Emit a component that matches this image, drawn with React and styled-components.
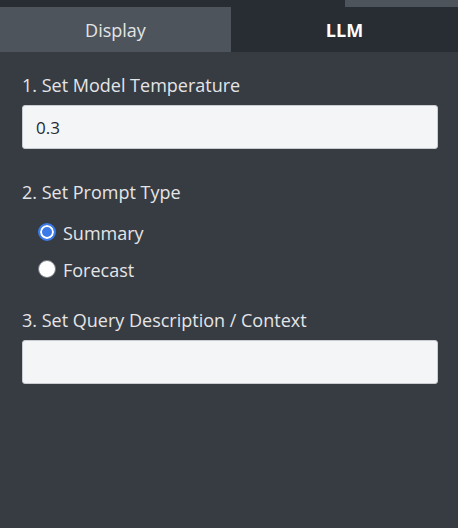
import React, {useState} from 'react';
import styled, {createGlobalStyle} from 'styled-components';

const GlobalStyle = createGlobalStyle`
    html, body {
        margin: 0;
        padding: 0;
        background: #373b42;
        font-family: "Open Sans", "Noto Sans", sans-serif;
    }
`;

const Panel = styled.div`
    width: 458px;
    height: 528px;
    display: flex;
    flex-direction: column;
    background: #373b42;
    color: #e6e7e9;
`;

const TopStrip = styled.div`
    height: 7px;
    display: flex;
    justify-content: flex-end;
    background: #282c33;
`;

const StripThumb = styled.div`
    width: 113px;
    background: #4e545b;
`;

const TabBar = styled.div`
    display: grid;
    grid-template-columns: 231px 1fr;
    height: 45px;
`;

const Tab = styled.button`
    border: none;
    margin: 0;
    padding: 0;
    font-family: inherit;
    font-size: 18px;
    cursor: pointer;
    background: ${props => props.$active ? '#282c33' : '#4e545b'};
    color: ${props => props.$active ? '#ffffff' : '#e3e4e6'};
    font-weight: ${props => props.$active ? 700 : 400};
`;

const Body = styled.div`
    display: flex;
    flex-direction: column;
    padding: 21px 20px 0 22px;
`;

const Section = styled.div`
    display: flex;
    flex-direction: column;
    margin-bottom: ${props => props.$gap || 31}px;
`;

const SectionLabel = styled.label`
    font-size: 18px;
    line-height: 24px;
    color: #e4e5e7;
    margin-bottom: 8px;
`;

const TextInput = styled.input`
    box-sizing: border-box;
    width: 416px;
    height: 44px;
    border: 1px solid #c9ccd1;
    border-radius: 3px;
    background: #f4f5f7;
    padding: 0 13px;
    font-family: inherit;
    font-size: 17px;
    color: #262a30;
    outline: none;
`;

const RadioList = styled.div`
    display: flex;
    flex-direction: column;
    gap: 14px;
    padding-left: 16px;
    margin-top: 10px;
`;

const RadioRow = styled.label`
    display: flex;
    align-items: center;
    gap: 7px;
    font-size: 18px;
    line-height: 23px;
    color: #e4e5e7;
    cursor: pointer;
`;

const RadioDot = styled.input`
    appearance: none;
    width: 18px;
    height: 18px;
    margin: 0 0 3px 0;
    border-radius: 50%;
    background: #ffffff;
    border: 1px solid #767a80;
    box-sizing: border-box;
    &:checked {
        background: #3b7ae8;
        border: 2px solid #3b7ae8;
        box-shadow: inset 0 0 0 2px #ffffff;
    }
`;

const App = () => {
    const [type, setType] = useState('summary');
    return (
        <>
            <GlobalStyle />
            <Panel>
                <TopStrip><StripThumb /></TopStrip>
                <TabBar>
                    <Tab>Display</Tab>
                    <Tab $active>LLM</Tab>
                </TabBar>
                <Body>
                    <Section>
                        <SectionLabel>1. Set Model Temperature</SectionLabel>
                        <TextInput defaultValue="0.3" />
                    </Section>
                    <Section $gap={26}>
                        <SectionLabel>2. Set Prompt Type</SectionLabel>
                        <RadioList>
                            <RadioRow>
                                <RadioDot type="radio" name="ptype" checked={type === 'summary'} onChange={() => setType('summary')} />
                                Summary
                            </RadioRow>
                            <RadioRow>
                                <RadioDot type="radio" name="ptype" checked={type === 'forecast'} onChange={() => setType('forecast')} />
                                Forecast
                            </RadioRow>
                        </RadioList>
                    </Section>
                    <Section>
                        <SectionLabel>3. Set Query Description / Context</SectionLabel>
                        <TextInput defaultValue="" />
                    </Section>
                </Body>
            </Panel>
        </>
    );
};

export default App;
